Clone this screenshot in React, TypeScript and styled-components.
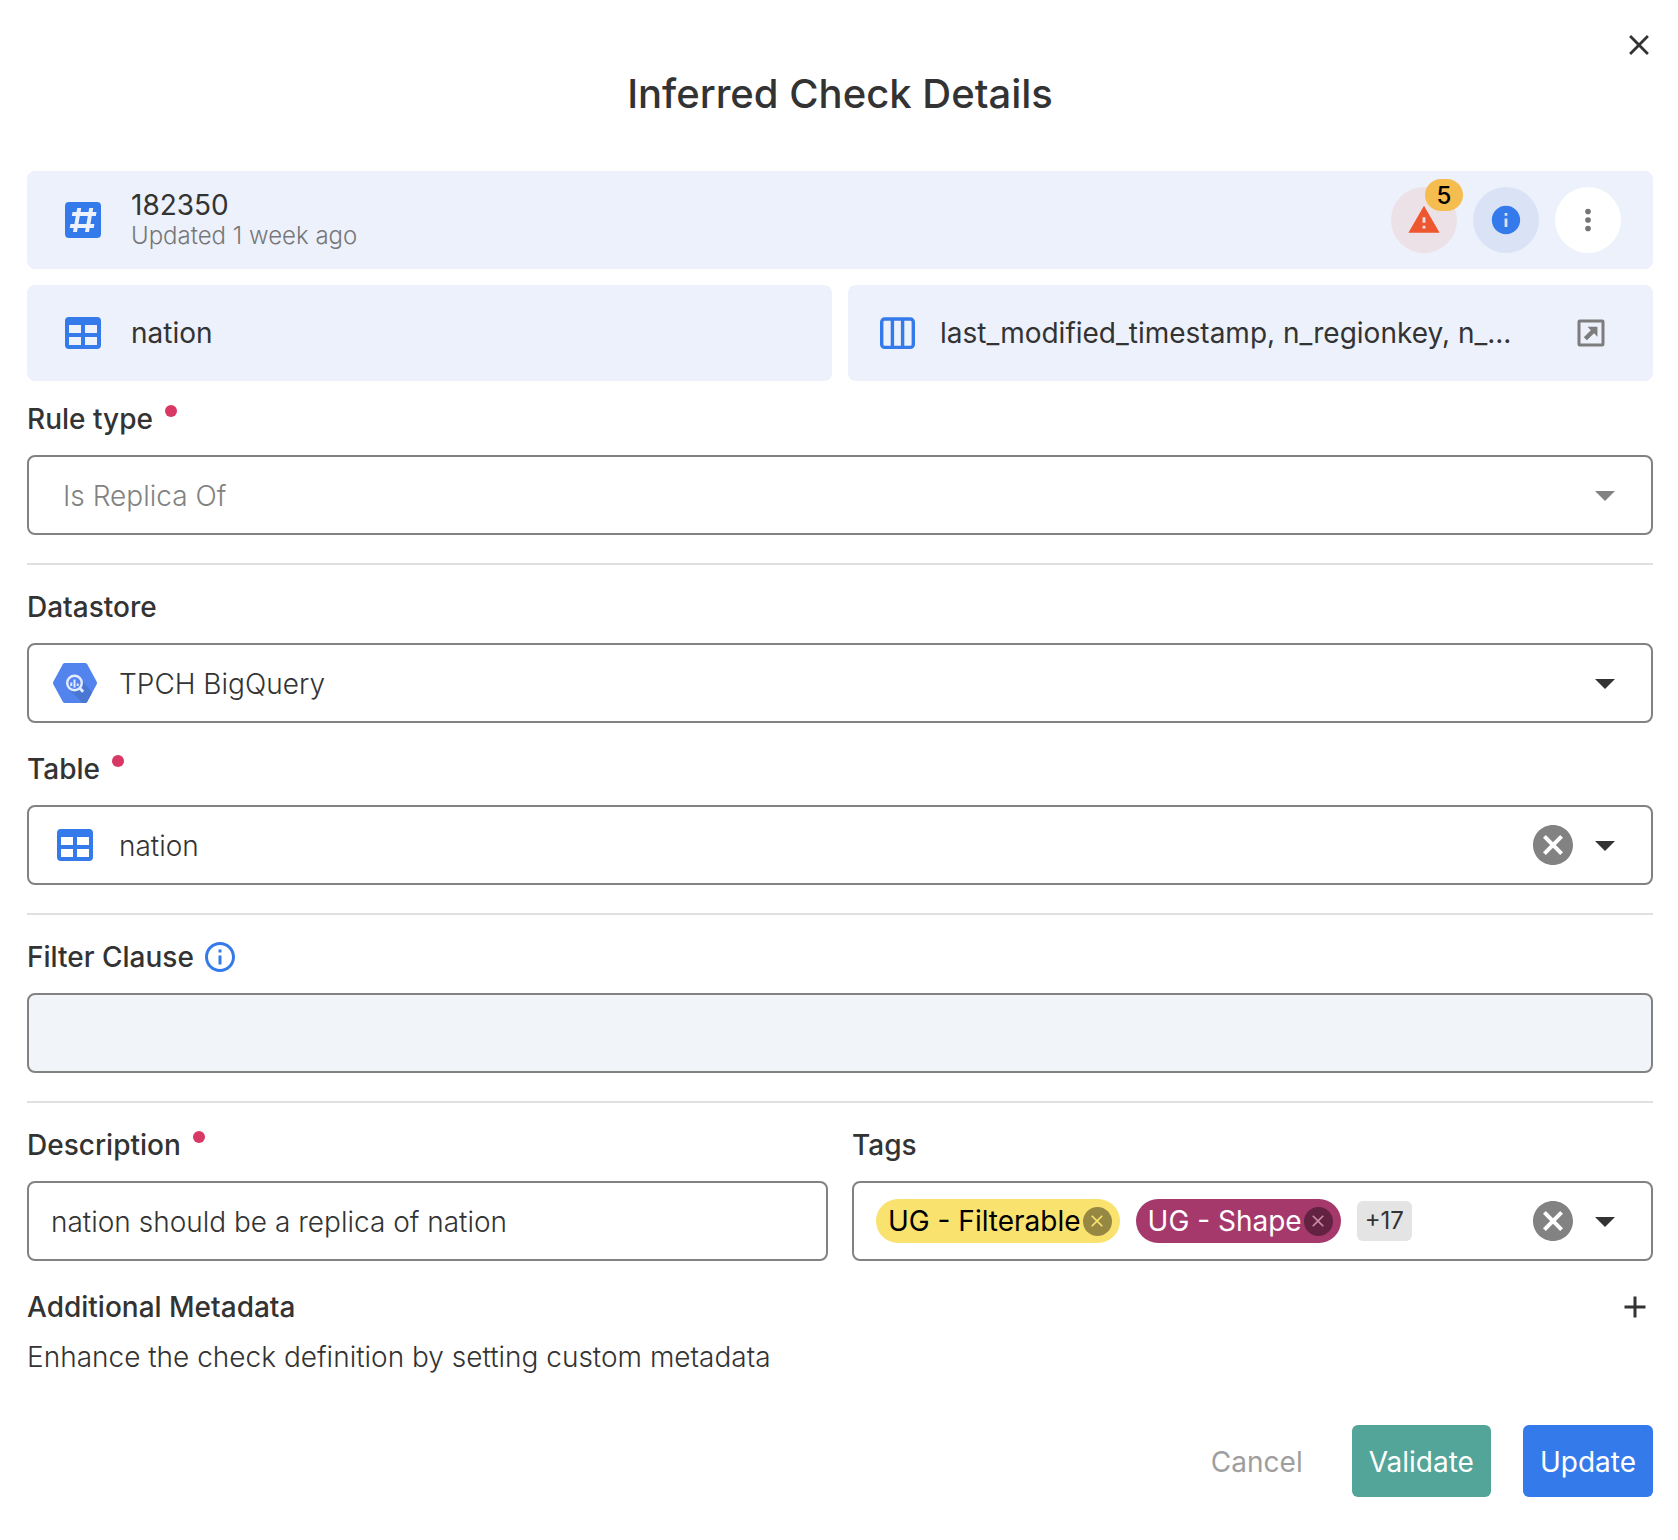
import React from 'react';
import styled, { createGlobalStyle } from 'styled-components';

const Global = createGlobalStyle`
  *, *::before, *::after { box-sizing: border-box; }
  body { margin: 0; background: #fff; color: #333; font-family: Inter, "Liberation Sans", sans-serif; font-size: 28px; line-height: 40px; }
  svg { display: block; flex: none; }
  button, input, select { font: inherit; color: inherit; }
`;

const Dialog = styled.main`
  display: flex;
  flex-direction: column;
  padding: 25px 25px 43px 27px;
`;

const TopBar = styled.div`
  display: flex;
  justify-content: flex-end;
  height: 41px;
`;

const IconButton = styled.button`
  display: flex;
  align-items: center;
  justify-content: center;
  flex: none;
  width: 40px;
  height: 40px;
  padding: 0;
  border: 0;
  background: none;
  color: #333;
  cursor: pointer;
`;

const CloseButton = styled(IconButton)`
  width: 28px;
`;

const AddButton = styled(IconButton)`
  width: 36px;
`;

const OpenButton = styled(IconButton)`
  width: 60px;
`;

const Title = styled.h1`
  margin: 0 0 49px;
  font-size: 40px;
  line-height: 56px;
  font-weight: 500;
  text-align: center;
`;

const Card = styled.section`
  display: flex;
  align-items: center;
  gap: 24px;
  min-width: 0;
  min-height: 96px;
  padding: 0 32px;
  border-radius: 8px;
  background: #ecf1fc;
  color: #333;
`;

const HeadCard = styled(Card)`
  min-height: 98px;
`;

const CardPair = styled.div`
  display: grid;
  grid-template-columns: 1fr 1fr;
  gap: 16px;
  margin-top: 16px;
`;

const CardText = styled.div`
  flex: 1;
  min-width: 0;
  overflow: hidden;
  white-space: nowrap;
`;

const CheckId = styled.div`
  line-height: 32px;
`;

const Updated = styled.div`
  font-size: 24px;
  line-height: 30px;
  font-weight: 300;
  color: #777;
`;

const Actions = styled.div`
  display: flex;
  gap: 16px;
`;

const RoundButton = styled.button<{ $bg: string }>`
  position: relative;
  display: flex;
  align-items: center;
  justify-content: center;
  width: 66px;
  height: 66px;
  padding: 0;
  border: 0;
  border-radius: 50%;
  background: ${(p) => p.$bg};
  cursor: pointer;
`;

const Badge = styled.span`
  position: absolute;
  top: -8px;
  right: -6px;
  width: 38px;
  height: 32px;
  border-radius: 16px;
  background: #f5bd4f;
  color: #000;
  font-size: 24px;
  line-height: 33px;
  font-weight: 500;
  text-align: center;
`;

const Field = styled.div`
  display: flex;
  flex-direction: column;
  min-width: 0;
  margin-top: 18px;
`;

const FieldGroup = styled.div`
  display: flex;
  flex-direction: column;
  gap: 8px;
`;

const LabelRow = styled.div<{ $gap?: number }>`
  display: flex;
  align-items: center;
  gap: ${(p) => p.$gap ?? 12}px;
  height: 40px;
  margin-bottom: 16px;
`;

const Label = styled.label`
  font-weight: 500;
`;

const Dot = styled.span`
  align-self: flex-start;
  width: 12px;
  height: 12px;
  margin-top: 6px;
  border-radius: 50%;
  background: #d93864;
`;

const Box = styled.div<{ $inset?: number }>`
  display: flex;
  align-items: center;
  height: 80px;
  padding: 0 22px 0 ${(p) => p.$inset ?? 22}px;
  border: 2px solid #828282;
  border-radius: 8px;
  background: #fff;
`;

const Select = styled.select`
  flex: 1;
  min-width: 0;
  height: 76px;
  padding: 2px 0 0;
  border: 0;
  outline: 0;
  appearance: none;
  background: none;
  font-weight: 300;
  &:disabled { color: #828282; opacity: 1; }
`;

const Leading = styled.span`
  display: flex;
  justify-content: center;
  width: 48px;
  margin-right: 20px;
`;

const Arrow = styled.span<{ $muted?: boolean }>`
  display: flex;
  justify-content: center;
  width: 48px;
  margin-left: 8px;
  color: ${(p) => (p.$muted ? '#828282' : '#333')};
`;

const TextInput = styled.input<{ $filled?: boolean }>`
  width: 100%;
  height: 80px;
  padding: 2px 22px 0;
  border: 2px solid #828282;
  border-radius: 8px;
  outline: 0;
  background: ${(p) => (p.$filled ? '#f1f5fa' : '#fff')};
  font-weight: 300;
`;

const Divider = styled.hr`
  width: 100%;
  height: 2px;
  margin: 28px 0 4px;
  border: 0;
  background: #e0e0e0;
`;

const Columns = styled.div`
  display: grid;
  grid-template-columns: 1fr 1fr;
  gap: 24px;
`;

const Chips = styled.div`
  display: flex;
  align-items: center;
  flex: 1;
  gap: 16px;
  min-width: 0;
`;

const Chip = styled.span<{ $bg: string; $fg: string }>`
  display: flex;
  align-items: center;
  gap: 2px;
  height: 44px;
  padding: 0 8px 0 12px;
  border-radius: 22px;
  background: ${(p) => p.$bg};
  color: ${(p) => p.$fg};
  line-height: 44px;
  white-space: nowrap;
`;

const ChipClose = styled.button<{ $bg: string; $fg: string }>`
  display: flex;
  align-items: center;
  justify-content: center;
  width: 29px;
  height: 29px;
  padding: 0;
  border: 0;
  border-radius: 50%;
  background: ${(p) => p.$bg};
  color: ${(p) => p.$fg};
`;

const More = styled.span`
  height: 40px;
  padding: 0 8px;
  border-radius: 6px;
  background: #e4e4e4;
  font-size: 24px;
`;

const MetaHead = styled.div`
  display: flex;
  align-items: center;
  justify-content: space-between;
  height: 40px;
  margin-top: 26px;
`;

const MetaTitle = styled.h2`
  margin: 0;
  font-size: 28px;
  font-weight: 500;
`;

const MetaText = styled.p`
  margin: 10px 0 0;
  font-weight: 300;
`;

const Footer = styled.footer`
  display: flex;
  justify-content: flex-end;
  gap: 32px;
  margin-top: 48px;
`;

const Button = styled.button<{ $bg?: string }>`
  height: 72px;
  padding: 2px 17px 0;
  border: 0;
  border-radius: 6px;
  background: ${(p) => p.$bg ?? 'transparent'};
  color: ${(p) => (p.$bg ? '#fff' : '#9e9e9e')};
  cursor: pointer;
`;

const Icon = ({ d, size, color = 'currentColor' }: { d: string; size: number; color?: string }) => (
  <svg width={size} height={size} viewBox="0 0 24 24" fill={color} aria-hidden="true">
    <path d={d} fillRule="evenodd" />
  </svg>
);

const BLUE = '#347aeb';
const paths = {
  close: 'M19 6.41 17.59 5 12 10.59 6.41 5 5 6.41 10.59 12 5 17.59 6.41 19 12 13.41 17.59 19 19 17.59 13.41 12z',
  table: 'M5,4H19A2,2 0 0,1 21,6V18A2,2 0 0,1 19,20H5A2,2 0 0,1 3,18V6A2,2 0 0,1 5,4M5,8V12H11V8H5M13,8V12H19V8H13M5,14V18H11V14H5M13,14V18H19V14H13Z',
  pound: 'M5,3H19A2,2 0 0,1 21,5V19A2,2 0 0,1 19,21H5A2,2 0 0,1 3,19V5A2,2 0 0,1 5,3M7,18H9L9.35,16H13.35L13,18H15L15.35,16H17.35L17.71,14H15.71L16.41,10H18.41L18.76,8H16.76L17.12,6H15.12L14.76,8H10.76L11.12,6H9.12L8.76,8H6.76L6.41,10H8.41L7.71,14H5.71L5.35,16H7.35L7,18M10.41,10H14.41L13.71,14H9.71L10.41,10Z',
  alert: 'M1 21h22L12 2 1 21zm12-3h-2v-2h2v2zm0-4h-2v-4h2v4z',
  info: 'M12 2C6.48 2 2 6.48 2 12s4.48 10 10 10 10-4.48 10-10S17.52 2 12 2zm1 15h-2v-6h2v6zm0-8h-2V7h2v2z',
  infoOutline: 'M11 7h2v2h-2zm0 4h2v6h-2zm1-9C6.48 2 2 6.48 2 12s4.48 10 10 10 10-4.48 10-10S17.52 2 12 2zm0 18c-4.41 0-8-3.59-8-8s3.59-8 8-8 8 3.59 8 8-3.59 8-8 8z',
  dots: 'M12,16A2,2 0 0,1 14,18A2,2 0 0,1 12,20A2,2 0 0,1 10,18A2,2 0 0,1 12,16M12,10A2,2 0 0,1 14,12A2,2 0 0,1 12,14A2,2 0 0,1 10,12A2,2 0 0,1 12,10M12,4A2,2 0 0,1 14,6A2,2 0 0,1 12,8A2,2 0 0,1 10,6A2,2 0 0,1 12,4Z',
  clear: 'M12,2C17.53,2 22,6.47 22,12C22,17.53 17.53,22 12,22C6.47,22 2,17.53 2,12C2,6.47 6.47,2 12,2M15.59,7L12,10.59L8.41,7L7,8.41L10.59,12L7,15.59L8.41,17L12,13.41L15.59,17L17,15.59L13.41,12L17,8.41L15.59,7Z',
  down: 'M7,10L12,15L17,10H7Z',
  plus: 'M19,13H13V19H11V13H5V11H11V5H13V11H19V13Z',
  open: 'M4.500,3H19.500A1.500,1.500 0 0,1 21,4.500V19.500A1.500,1.500 0 0,1 19.500,21H4.500A1.500,1.500 0 0,1 3,19.500V4.500A1.500,1.500 0 0,1 4.500,3M5,5V19H19V5H5M9.700,7.900H16.300V14.500L14,12.200L9.300,16.900L7.200,14.800L11.900,10.100L9.700,7.900Z',
};

const ColumnsIcon = () => (
  <svg width="36" height="36" viewBox="0 0 36 36" fill="none" stroke={BLUE} strokeWidth="3.4" aria-hidden="true">
    <rect x="1.7" y="4" width="31.600" height="28.400" rx="3" />
    <path d="M12.400 4v28M22.600 4v28" />
  </svg>
);

const BigQueryIcon = () => (
  <svg width="44" height="40" viewBox="0 0 44 40" aria-hidden="true">
    <path d="M12 0h20q1.500 0 2.200 1.200l9.400 17.300q.8 1.500 0 3l-9.400 17.300Q33.500 40 32 40H12q-1.500 0-2.200-1.200L.4 21.500q-.8-1.500 0-3L9.800 1.200Q10.500 0 12 0z" fill="#5384ee" />
    <path d="M16 26l13.600 14H32q1.500 0 2.200-1.200l5.100-9.300L27 15z" fill="#4a77d2" />
    <circle cx="21.500" cy="20" r="7.300" fill="#5384ee" stroke="#e3ecff" strokeWidth="2.400" />
    <path d="M26.800 25.300l3.400 3.400" stroke="#e3ecff" strokeWidth="3" />
    <path d="M18.300 19.500v3.500M21.500 16.500v8M24.700 20.500v2.500" stroke="#e3ecff" strokeWidth="2" />
  </svg>
);

export default function App() {
  return (
    <>
      <Global />
      <Dialog>
        <TopBar>
          <CloseButton aria-label="Close"><Icon d={paths.close} size={34} /></CloseButton>
        </TopBar>
        <Title>Inferred Check Details</Title>

        <HeadCard>
          <Icon d={paths.pound} size={48} color={BLUE} />
          <CardText>
            <CheckId>182350</CheckId>
            <Updated>Updated 1 week ago</Updated>
          </CardText>
          <Actions>
            <RoundButton $bg="#ece1e7" aria-label="Anomalies">
              <Icon d={paths.alert} size={34} color="#ed562f" />
              <Badge>5</Badge>
            </RoundButton>
            <RoundButton $bg="#dae3f6" aria-label="Information">
              <Icon d={paths.info} size={34} color={BLUE} />
            </RoundButton>
            <RoundButton $bg="#fff" aria-label="More options">
              <Icon d={paths.dots} size={34} color="#757575" />
            </RoundButton>
          </Actions>
        </HeadCard>
        <CardPair>
          <Card>
            <Icon d={paths.table} size={48} color={BLUE} />
            <CardText>nation</CardText>
          </Card>
          <Card>
            <ColumnsIcon />
            <CardText>last_modified_timestamp, n_regionkey, n_...</CardText>
            <OpenButton aria-label="Open fields"><Icon d={paths.open} size={36} color="#7d7d7d" /></OpenButton>
          </Card>
        </CardPair>

        <Field>
          <LabelRow><Label htmlFor="rule">Rule type</Label><Dot /></LabelRow>
          <Box $inset={34}>
            <Select id="rule" disabled><option>Is Replica Of</option></Select>
            <Arrow $muted><Icon d={paths.down} size={48} /></Arrow>
          </Box>
        </Field>
        <Divider />
        <FieldGroup>
          <Field>
            <LabelRow><Label htmlFor="store">Datastore</Label></LabelRow>
            <Box>
              <Leading><BigQueryIcon /></Leading>
              <Select id="store"><option>TPCH BigQuery</option></Select>
              <Arrow><Icon d={paths.down} size={48} /></Arrow>
            </Box>
          </Field>
          <Field>
            <LabelRow><Label htmlFor="table">Table</Label><Dot /></LabelRow>
            <Box>
              <Leading><Icon d={paths.table} size={48} color={BLUE} /></Leading>
              <Select id="table"><option>nation</option></Select>
              <IconButton aria-label="Clear table"><Icon d={paths.clear} size={48} color="#828282" /></IconButton>
              <Arrow><Icon d={paths.down} size={48} /></Arrow>
            </Box>
          </Field>
        </FieldGroup>
        <Divider />
        <Field>
          <LabelRow $gap={8}><Label htmlFor="filter">Filter Clause</Label><Icon d={paths.infoOutline} size={36} color={BLUE} /></LabelRow>
          <TextInput id="filter" $filled />
        </Field>
        <Divider />
        <Columns>
          <Field>
            <LabelRow><Label htmlFor="description">Description</Label><Dot /></LabelRow>
            <TextInput id="description" defaultValue="nation should be a replica of nation" />
          </Field>
          <Field role="group" aria-labelledby="tags-label">
            <LabelRow><Label as="span" id="tags-label">Tags</Label></LabelRow>
            <Box>
              <Chips>
                <Chip $bg="#fae26f" $fg="#000">UG - Filterable
                  <ChipClose $bg="#968843" $fg="#fae26f" aria-label="Remove UG - Filterable"><Icon d={paths.close} size={20} /></ChipClose>
                </Chip>
                <Chip $bg="#a5396c" $fg="#fff">UG - Shape
                  <ChipClose $bg="#632241" $fg="#c98aa8" aria-label="Remove UG - Shape"><Icon d={paths.close} size={20} /></ChipClose>
                </Chip>
                <More>+17</More>
              </Chips>
              <IconButton aria-label="Clear tags"><Icon d={paths.clear} size={48} color="#828282" /></IconButton>
              <Arrow><Icon d={paths.down} size={48} /></Arrow>
            </Box>
          </Field>
        </Columns>

        <MetaHead>
          <MetaTitle>Additional Metadata</MetaTitle>
          <AddButton aria-label="Add metadata"><Icon d={paths.plus} size={36} /></AddButton>
        </MetaHead>
        <MetaText>Enhance the check definition by setting custom metadata</MetaText>

        <Footer>
          <Button>Cancel</Button>
          <Button $bg="#53a499">Validate</Button>
          <Button $bg={BLUE}>Update</Button>
        </Footer>
      </Dialog>
    </>
  );
}
